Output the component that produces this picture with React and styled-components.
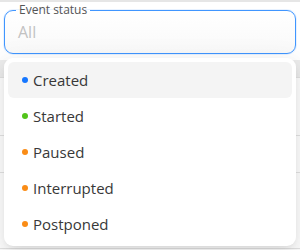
import styled, { createGlobalStyle } from "styled-components";

const GlobalStyle = createGlobalStyle`
	html, body {
		margin: 0;
		padding: 0;
		background: #fff;
		font-family: "Open Sans", "Noto Sans", sans-serif;
	}
`;

const Page = styled.div`
	position: relative;
	width: 300px;
	height: 250px;
	overflow: hidden;
	background: #fff;
`;

const Table = styled.div`
	display: flex;
	flex-direction: column;
	border-top: 2px solid #e6e6e6;
`;

const Row = styled.div`
	height: ${(p) => p.$h}px;
	background: ${(p) => p.$bg || "#fff"};
	border-bottom: 1px solid ${(p) => (p.$line ? "#e4e4e4" : "transparent")};
	box-sizing: border-box;
	display: flex;
	justify-content: flex-end;
	align-items: flex-end;
	padding-right: 70px;
	font-size: 13px;
	color: #333;
`;

const Field = styled.fieldset`
	position: absolute;
	left: 4px;
	top: 3px;
	width: 292px;
	height: 51px;
	box-sizing: border-box;
	margin: 0;
	padding: 0 12px 0 12px;
	border: 1.5px solid #4096ff;
	border-radius: 9px;
	background: linear-gradient(#fff, #f9f9f9);
	box-shadow: 0 0 0 1px rgba(64, 150, 255, 0.12);
`;

const Legend = styled.legend`
	padding: 0 3px;
	margin-left: -1px;
	font-size: 12px;
	line-height: 14px;
	color: #555;
`;

const Placeholder = styled.div`
	padding: 4px 0 0 1px;
	font-size: 16px;
	line-height: 22px;
	color: #c2c2c2;
`;

const Menu = styled.div`
	position: absolute;
	left: 4px;
	top: 58px;
	width: 292px;
	box-sizing: border-box;
	padding: 4px;
	background: #fff;
	border-radius: 9px;
	box-shadow: 0 6px 16px rgba(0, 0, 0, 0.08), 0 3px 6px -4px rgba(0, 0, 0, 0.12),
		0 9px 28px 8px rgba(0, 0, 0, 0.05);
	display: flex;
	flex-direction: column;
`;

const Item = styled.div`
	height: 36px;
	display: flex;
	align-items: center;
	gap: 5px;
	padding-left: 14px;
	border-radius: 6px;
	background: ${(p) => (p.$active ? "#f4f4f4" : "transparent")};
	font-size: 15px;
	color: #383838;
`;

const Dot = styled.span`
	width: 6px;
	height: 6px;
	border-radius: 50%;
	background: ${(p) => p.$color};
	flex-shrink: 0;
`;

const statuses = [
	{ name: "Created", color: "#1677ff" },
	{ name: "Started", color: "#52c41a" },
	{ name: "Paused", color: "#fa8c16" },
	{ name: "Interrupted", color: "#fa8c16" },
	{ name: "Postponed", color: "#fa8c16" },
];

export default function App() {
	return (
		<Page>
			<GlobalStyle />
			<Table>
				<Row $h={58} />
				<Row $h={18} $bg="#ededed" $line />
				<Row $h={58} $line />
				<Row $h={37} $line />
				<Row $h={76} $line />
				<Row $h={20}>1 May 03:00</Row>
			</Table>
			<Field>
				<Legend>Event status</Legend>
				<Placeholder>All</Placeholder>
			</Field>
			<Menu>
				{statuses.map((s, i) => (
					<Item key={s.name} $active={i === 0}>
						<Dot $color={s.color} />
						{s.name}
					</Item>
				))}
			</Menu>
		</Page>
	);
}
